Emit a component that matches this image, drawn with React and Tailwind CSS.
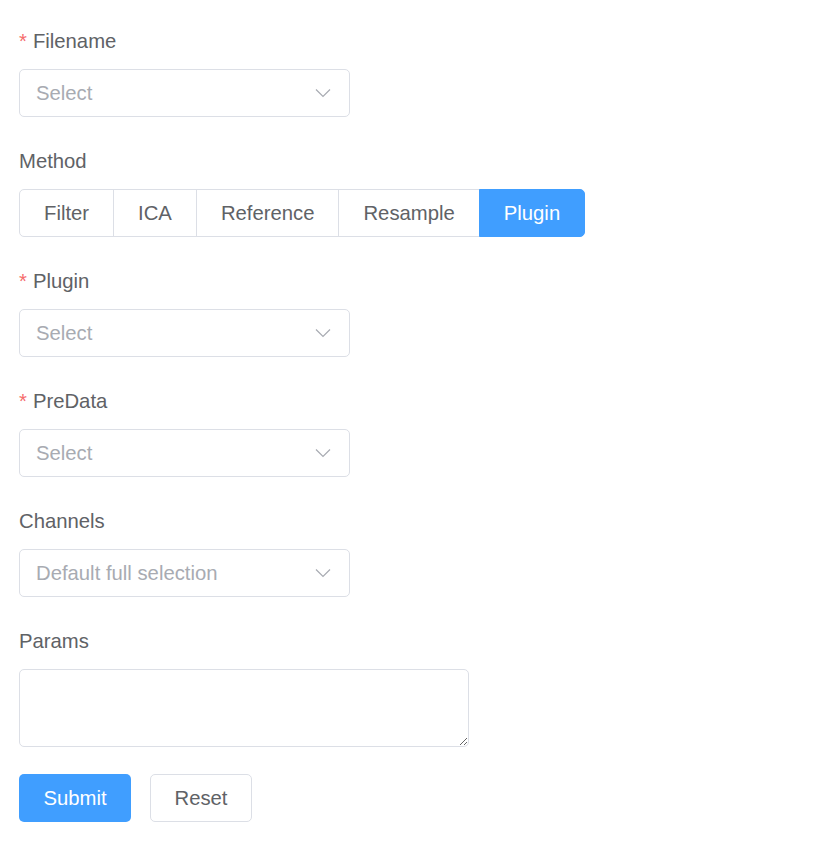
import React, { useState } from 'react';

const Chevron = () => (
  <svg width="16" height="10" viewBox="0 0 16 10" fill="none" className="shrink-0">
    <path d="M1 1.5 L8 8.5 L15 1.5" stroke="#a8abb2" strokeWidth="1.2" />
  </svg>
);

const Label = ({ required, children }) => (
  <div className="h-[40px] leading-[40px] text-[20.3px] text-[#606266] flex items-center">
    {required && <span className="text-[#f56c6c] mr-[6px]">*</span>}
    <span>{children}</span>
  </div>
);

const SelectBox = ({ placeholder = 'Select' }) => (
  <div className="mt-[8px] w-[331px] h-[48px] border border-[#dcdfe6] rounded-[5px] bg-white flex items-center justify-between pl-[16px] pr-[18px]">
    <span className="text-[20.3px] text-[#a8abb2]">{placeholder}</span>
    <Chevron />
  </div>
);

const methods = ['Filter', 'ICA', 'Reference', 'Resample', 'Plugin'];

export default function App() {
  const [method, setMethod] = useState('Plugin');

  return (
    <div className="bg-white min-h-[864px] pl-[19px] pt-[21px]" style={{ fontFamily: '"Liberation Sans", Arial, sans-serif' }}>
      <div className="mb-[24px]">
        <Label required>Filename</Label>
        <SelectBox />
      </div>

      <div className="mb-[24px]">
        <Label>Method</Label>
        <div className="mt-[8px] flex">
          {methods.map((m, i) => {
            const active = m === method;
            return (
              <button
                key={m}
                onClick={() => setMethod(m)}
                className={
                  'h-[48px] px-[24px] text-[20.3px] border ' +
                  (i === 0 ? 'rounded-l-[5px] ' : '-ml-px ') +
                  (i === methods.length - 1 ? 'rounded-r-[5px] ' : '') +
                  (active ? 'bg-[#409eff] border-[#409eff] text-white relative' : 'bg-white border-[#dcdfe6] text-[#606266]')
                }
              >
                {m}
              </button>
            );
          })}
        </div>
      </div>

      <div className="mb-[24px]">
        <Label required>Plugin</Label>
        <SelectBox />
      </div>

      <div className="mb-[24px]">
        <Label required>PreData</Label>
        <SelectBox />
      </div>

      <div className="mb-[24px]">
        <Label>Channels</Label>
        <SelectBox placeholder="Default full selection" />
      </div>

      <div className="mb-[27px]">
        <Label>Params</Label>
        <textarea className="mt-[8px] block w-[450px] h-[78px] border border-[#dcdfe6] rounded-[5px] outline-none px-[16px] py-[6px] text-[20.3px]" />
      </div>

      <div className="flex gap-[19px]">
        <button className="w-[112px] h-[48px] rounded-[5px] bg-[#409eff] text-white text-[20.3px]">Submit</button>
        <button className="w-[102px] h-[48px] rounded-[5px] border border-[#dcdfe6] bg-white text-[#606266] text-[20.3px]">Reset</button>
      </div>
    </div>
  );
}
